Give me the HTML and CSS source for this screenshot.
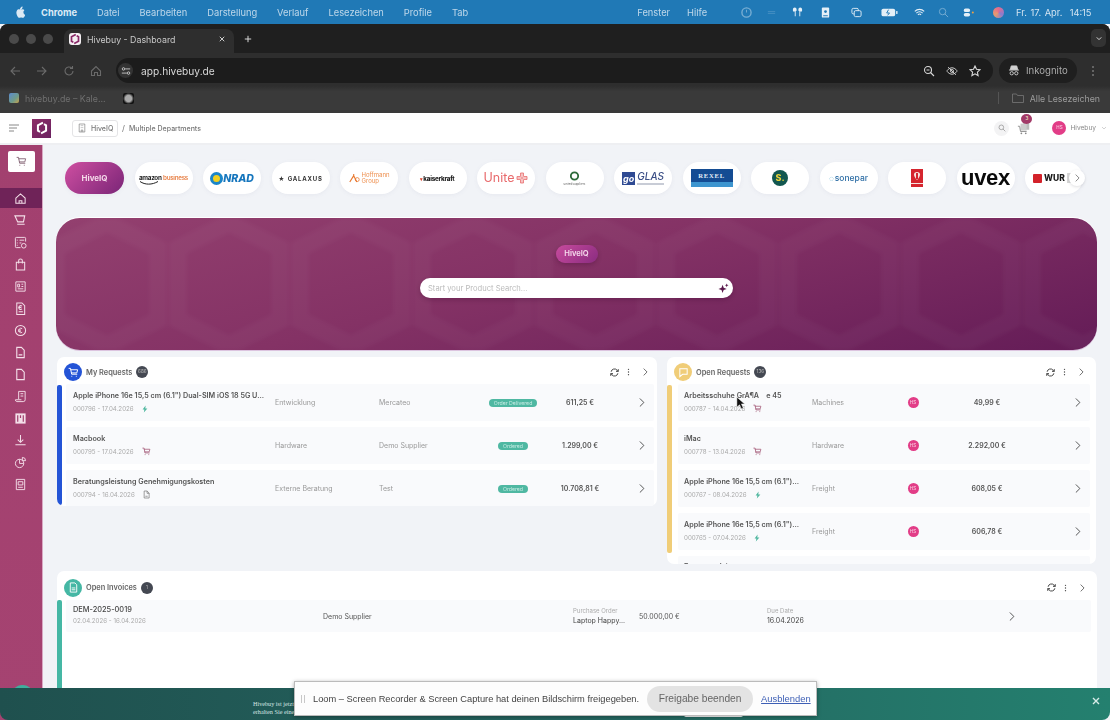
FILE: index.html
```html
<!DOCTYPE html>
<html lang="de">
<head>
<meta charset="utf-8">
<title>Hivebuy - Dashboard</title>
<link rel="stylesheet" href="styles.css">
</head>
<body>
<svg class="defs" width="0" height="0">
  <symbol id="cart" viewBox="0 0 16 16"><path d="M1.500 2h2.200l1.600 8.500h7.600M4 4h10l-1.200 4.600H5M5.500 13.500h.1M12 13.500h.1" fill="none" stroke="currentColor" stroke-width="1.400" stroke-linecap="round" stroke-linejoin="round"/></symbol>
  <symbol id="chev" viewBox="0 0 8 12"><path d="M1.500 1l5 5-5 5" fill="none" stroke="currentColor" stroke-width="1.200" stroke-linecap="round" stroke-linejoin="round"/></symbol>
  <symbol id="bolt" viewBox="0 0 10 12"><path d="M6 0L1 7h3l-1 5 6-7H5.500z" fill="currentColor"/></symbol>
  <symbol id="doc" viewBox="0 0 12 14"><path d="M2 1h5l3.500 3.500V13H2zM7 1v4h3.500M4 10h4" fill="none" stroke="currentColor" stroke-width="1.200" stroke-linejoin="round"/></symbol>
  <symbol id="refresh" viewBox="0 0 12 12"><path d="M1.500 5A4.500 4.500 0 0 1 9.500 3L11 4.500M10.500 7A4.500 4.500 0 0 1 2.500 9L1 7.500M11 1.500v3H8M1 10.500v-3h3" fill="none" stroke="currentColor" stroke-width="1.300" stroke-linejoin="round"/></symbol>
  <symbol id="dots" viewBox="0 0 4 12"><circle cx="2" cy="2" r="1" fill="currentColor"/><circle cx="2" cy="6" r="1" fill="currentColor"/><circle cx="2" cy="10" r="1" fill="currentColor"/></symbol>
  <symbol id="hive" viewBox="0 0 12 12"><path d="M6.800 1.400L2.500 3.700v4.600l1.800 1M5.200 10.600l4.300-2.300V3.700l-1.800-1" fill="none" stroke="currentColor" stroke-width="1.700"/></symbol>
</svg>

<div class="menubar">
  <svg class="apple" viewBox="0 0 12 14"><path d="M8.200 3.300c.7-.9 1-1.800.9-2.800-.9.100-1.800.6-2.400 1.300-.5.600-.9 1.500-.8 2.400 1 .1 1.800-.3 2.300-.900zM10.100 7.300c0-1.500 1.200-2.300 1.300-2.300-.7-1-1.800-1.200-2.200-1.200-.9-.1-1.800.6-2.300.6s-1.200-.6-2-.6C3.800 3.800 2.800 4.400 2.200 5.400 1 7.500 1.900 10.600 3.100 12.300c.6.800 1.200 1.700 2.100 1.700.8 0 1.100-.5 2.100-.5s1.300.5 2.100.5c.9 0 1.400-.8 2-1.700.6-.9.900-1.800.9-1.900-.1 0-2.200-.8-2.200-3.100z" fill="currentColor"/></svg>
  <b class="menu-app">Chrome</b>
  <span class="menu-item">Datei</span>
  <span class="menu-item">Bearbeiten</span>
  <span class="menu-item">Darstellung</span>
  <span class="menu-item">Verlauf</span>
  <span class="menu-item">Lesezeichen</span>
  <span class="menu-item">Profile</span>
  <span class="menu-item">Tab</span>
  <span class="menu-item menu-push">Fenster</span>
  <span class="menu-item">Hilfe</span>
  <div class="sysicons">
    <svg class="st st-dim" viewBox="0 0 12 12"><circle cx="6" cy="6" r="5" fill="none" stroke="currentColor" stroke-width="1.500"/><path d="M6 3v3" stroke="currentColor"/></svg>
    <svg class="st st-dim2" viewBox="0 0 12 12"><path d="M2 5h8M2 7h8" stroke="currentColor"/></svg>
    <svg class="st" viewBox="0 0 12 12"><path d="M1 2.500a2 2 0 0 1 4 0V4L4 4.500V10H3V5H2a1 1 0 0 1-1-1zM11 2.500a2 2 0 0 0-4 0V4l1 .5V10h1V5h1a1 1 0 0 0 1-1z" fill="currentColor"/></svg>
    <svg class="st" viewBox="0 0 12 12"><rect x="2" y="0.500" width="8" height="11" rx="1" fill="currentColor"/><circle cx="6" cy="5" r="1.500" fill="#2178b5"/><path d="M3.500 9.500h5" stroke="#2178b5"/></svg>
    <svg class="st" viewBox="0 0 12 12"><rect x="1" y="1.500" width="7" height="6" rx="1.500" fill="none" stroke="currentColor"/><rect x="3.500" y="4" width="7.500" height="6.500" rx="1.500" fill="#2178b5" stroke="currentColor"/></svg>
    <svg class="st st-bat" viewBox="0 0 18 10"><rect x="0.500" y="1" width="14.500" height="8" rx="2" fill="currentColor"/><rect x="16" y="3.500" width="1.500" height="3" fill="currentColor"/><path d="M8 2L6 5.500h3L7 8" stroke="#2178b5" fill="none"/></svg>
    <svg class="st" viewBox="0 0 14 12"><path d="M1 4.500a8.500 8.500 0 0 1 12 0M3 6.800a5.500 5.500 0 0 1 8 0M5 9a2.500 2.500 0 0 1 4 0" fill="none" stroke="currentColor" stroke-width="1.300"/></svg>
    <svg class="st st-dim" viewBox="0 0 12 12"><circle cx="5" cy="5" r="3.500" fill="none" stroke="currentColor"/><path d="M7.500 7.500L11 11" stroke="currentColor"/></svg>
    <svg class="st" viewBox="0 0 14 12"><rect x="1" y="1" width="8" height="4.500" rx="2.200" fill="currentColor"/><rect x="1" y="6.500" width="8" height="4.500" rx="2.200" fill="currentColor"/><circle cx="12.500" cy="6" r="1.300" fill="#f0a040"/></svg>
    <span class="st-avatar"></span>
    <span class="st-date">Fr. 17. Apr.&nbsp; 14:15</span>
  </div>
</div>

<div class="browser">
  <div class="tabstrip">
    <div class="lights"><i></i><i></i><i></i></div>
    <div class="tab">
      <span class="favicon"><svg><use href="#hive"/></svg></span>
      <span class="tab-title">Hivebuy - Dashboard</span>
      <svg class="tab-x" viewBox="0 0 8 8"><path d="M1 1l6 6M7 1L1 7" stroke="currentColor" stroke-width="1.200"/></svg>
    </div>
    <svg class="tab-plus" viewBox="0 0 10 10"><path d="M5 1v8M1 5h8" stroke="currentColor" stroke-width="1.200"/></svg>
    <span class="tab-down"><svg viewBox="0 0 8 6"><path d="M1 1.500l3 3 3-3" fill="none" stroke="currentColor" stroke-width="1.300"/></svg></span>
  </div>
  <div class="toolbar">
    <svg class="tb tb-off" viewBox="0 0 12 12"><path d="M11 6H2M6 2L2 6l4 4" fill="none" stroke="currentColor" stroke-width="1.100"/></svg>
    <svg class="tb tb-off" viewBox="0 0 12 12"><path d="M1 6h9M6 2l4 4-4 4" fill="none" stroke="currentColor" stroke-width="1.100"/></svg>
    <svg class="tb tb-off" viewBox="0 0 12 12"><path d="M10 6a4 4 0 1 1-1.300-3M9.500 1v2.500H7" fill="none" stroke="currentColor" stroke-width="1.100"/></svg>
    <svg class="tb tb-off" viewBox="0 0 12 12"><path d="M1.500 6L6 1.500 10.500 6v4.500h-3V7.500h-3v3h-3z" fill="none" stroke="currentColor" stroke-width="1.100"/></svg>
    <div class="omnibox">
      <span class="tune"><svg viewBox="0 0 12 12"><path d="M5 3.500h6M1 8.500h6" stroke="currentColor"/><circle cx="3" cy="3.500" r="1.500" fill="none" stroke="currentColor"/><circle cx="9" cy="8.500" r="1.500" fill="none" stroke="currentColor"/></svg></span>
      <span class="url">app.hivebuy.de</span>
      <svg class="om om-first" viewBox="0 0 12 12"><circle cx="5" cy="5" r="3.500" fill="none" stroke="currentColor" stroke-width="1.100"/><path d="M7.500 7.500L11 11M3.500 5h3" stroke="currentColor" stroke-width="1.100"/></svg>
      <svg class="om" viewBox="0 0 14 12"><path d="M1 6s2.200-3.800 6-3.800S13 6 13 6s-2.200 3.800-6 3.800S1 6 1 6zM2.500 1.500l9 9" fill="none" stroke="currentColor" stroke-width="1.100"/><circle cx="7" cy="6" r="1.800" fill="none" stroke="currentColor"/></svg>
      <svg class="om" viewBox="0 0 12 12"><path d="M6 1l1.500 3.300 3.500.4-2.600 2.400.7 3.500L6 8.800l-3.100 1.800.7-3.500L1 4.700l3.500-.4z" fill="none" stroke="currentColor" stroke-width="1.100"/></svg>
    </div>
    <div class="incognito">
      <svg viewBox="0 0 12 12"><path d="M3 1h6l1 4H2zM0.500 5.500h11" fill="currentColor" stroke="currentColor"/><circle cx="3.500" cy="9" r="1.800" fill="none" stroke="currentColor"/><circle cx="8.500" cy="9" r="1.800" fill="none" stroke="currentColor"/></svg>
      <span>Inkognito</span>
    </div>
    <svg class="tb-dots"><use href="#dots"/></svg>
  </div>
  <div class="bookmarks">
    <span class="bm-icon"></span>
    <span class="bm-text">hivebuy.de – Kale...</span>
    <span class="bm-icon2"></span>
    <span class="bm-sep"></span>
    <svg class="bm-folder" viewBox="0 0 12 10"><path d="M.5 1h4l1 1.500h6v7H.5z" fill="none" stroke="currentColor" stroke-width=".8"/></svg>
    <span class="bm-all">Alle Lesezeichen</span>
  </div>
</div>

<header class="apphead">
  <svg class="burger" viewBox="0 0 10 8"><path d="M0 1h10M0 4h8M0 7h5" stroke="currentColor"/></svg>
  <span class="applogo"><svg><use href="#hive"/></svg></span>
  <span class="crumb-box">
    <svg viewBox="0 0 10 12"><path d="M1.500 1h7v10h-7zM3.500 3h1M5.500 3h1M3.500 5.500h1M5.500 5.500h1M4 11V8.500h2V11" fill="none" stroke="currentColor" stroke-width=".8"/></svg>
    <span>HiveIQ</span>
  </span>
  <span class="crumb-sep">/</span>
  <span class="crumb-dept">Multiple Departments</span>
  <span class="head-search"><svg viewBox="0 0 12 12"><circle cx="5" cy="5" r="3.500" fill="none" stroke="currentColor"/><path d="M7.500 7.500L11 11" stroke="currentColor"/></svg></span>
  <span class="head-cart">
    <svg viewBox="0 0 16 16"><rect x="7" y="1" width="7" height="9" fill="#bbb"/><rect x="4" y="3" width="7" height="8" fill="#ccc"/><path d="M1 6h2l1 6h7" fill="none" stroke="#888"/><circle cx="5" cy="14" r="1" fill="#888"/><circle cx="10" cy="14" r="1" fill="#888"/></svg>
    <b class="head-badge">3</b>
  </span>
  <span class="avatar avatar-head">HS</span>
  <span class="head-user">Hivebuy</span>
  <svg class="head-down" viewBox="0 0 8 6"><path d="M1 1.500l3 3 3-3" fill="none" stroke="currentColor"/></svg>
</header>

<div class="app">
  <nav class="sidebar">
    <span class="shop-btn"><svg><use href="#cart"/></svg></span>
    <span class="nav nav-active"><svg viewBox="0 0 14 14"><path d="M2 6.500L7 2l5 4.500V12H2zM5.500 12V9.500h3V12" fill="none" stroke="currentColor" stroke-width="1.100"/></svg></span>
    <span class="nav"><svg viewBox="0 0 14 14"><path d="M1 2h10.500l-1.300 6.500H4zM3.500 11h8" fill="none" stroke="currentColor" stroke-width="1.200"/></svg></span>
    <span class="nav"><svg viewBox="0 0 14 14"><path d="M12.500 6V2.500a1 1 0 0 0-1-1h-9a1 1 0 0 0-1 1v9a1 1 0 0 0 1 1H7M3 4.500h1M6 4.500h5M3 7.500h1M6 7.500h2M3 10h1" fill="none" stroke="currentColor"/><circle cx="10.500" cy="10.500" r="2.500" fill="none" stroke="currentColor"/></svg></span>
    <span class="nav"><svg viewBox="0 0 14 14"><path d="M2.500 4.500h9v8.500h-9zM5 6V3a2 2 0 0 1 4 0v3" fill="none" stroke="currentColor" stroke-width="1.100"/></svg></span>
    <span class="nav"><svg viewBox="0 0 14 14"><path d="M2 2h10v10H2zM4 4.500h2v3H4zM8 4.500h2M8 7h2M4 9.500h6" fill="none" stroke="currentColor"/></svg></span>
    <span class="nav"><svg viewBox="0 0 14 14"><path d="M3 1h5.500l3 3v9.500H3zM5 10.500h4.500M8.500 4.500a2 2 0 1 0 0 3M5 6h3" fill="none" stroke="currentColor" stroke-width="1.100"/></svg></span>
    <span class="nav"><svg viewBox="0 0 14 14"><circle cx="7" cy="7" r="5.500" fill="none" stroke="currentColor" stroke-width="1.100"/><path d="M8.800 5a2.400 2.400 0 1 0 0 4M4.500 6.500h3M4.500 7.800h3" fill="none" stroke="currentColor"/></svg></span>
    <span class="nav"><svg viewBox="0 0 14 14"><path d="M3 1.500h5l3 3v8H3zM5 9.500h4" fill="none" stroke="currentColor" stroke-width="1.200"/></svg></span>
    <span class="nav"><svg viewBox="0 0 14 14"><path d="M3 1.500h5l3 3v8H3z" fill="none" stroke="currentColor" stroke-width="1.200"/></svg></span>
    <span class="nav"><svg viewBox="0 0 14 14"><path d="M5 1.500h7v9a2 2 0 0 1-2 2H3a2 2 0 0 1-1.500-2H8M5 10V1.500M7 4h3M7 6.500h3" fill="none" stroke="currentColor"/></svg></span>
    <span class="nav"><svg viewBox="0 0 14 14"><path d="M1.500 1.500h11v11h-11z" fill="currentColor"/><path d="M4 3.500v7M7 3.500v3M10 3.500v7" stroke="#a2416f" stroke-width="1.300"/></svg></span>
    <span class="nav"><svg viewBox="0 0 14 14"><path d="M7 1v7.500M4 6l3 3 3-3M1.500 11.500h11" fill="none" stroke="currentColor" stroke-width="1.100"/></svg></span>
    <span class="nav"><svg viewBox="0 0 14 14"><circle cx="6" cy="8" r="4.500" fill="none" stroke="currentColor"/><path d="M6 8V3.500M6 8h4.500M9 1.500a3.500 3.500 0 0 1 3.500 3.500H9z" fill="none" stroke="currentColor"/></svg></span>
    <span class="nav"><svg viewBox="0 0 14 14"><path d="M2.500 1.500h9v11h-9zM4.500 4h5v3.500h-5zM4.500 10h5" fill="none" stroke="currentColor"/></svg></span>
    <span class="nav-chat"></span>
  </nav>

  <main class="content">
    <div class="suppliers">
      <span class="pill pill-main">HiveIQ</span>
      <span class="pill"><span class="l-amazon"><b>amazon</b> <i>business</i><svg viewBox="0 0 20 4"><path d="M1 .5c5 3.500 12 3.500 18 0" fill="none" stroke="#222"/></svg></span></span>
      <span class="pill"><span class="l-conrad-c"></span><span class="l-conrad">NRAD</span></span>
      <span class="pill"><span class="l-galaxus">★ GALAXUS</span></span>
      <span class="pill"><svg class="l-hof-i" viewBox="0 0 14 12"><path d="M1 11L6 3M6 3l4 8M6 1v4" fill="none" stroke="#e8782e" stroke-width="1.400"/><circle cx="10.500" cy="8" r="2.500" fill="none" stroke="#e8782e"/></svg><span class="l-hof">Hoffmann<br>Group</span></span>
      <span class="pill"><span class="l-kk">kaiserkraft</span></span>
      <span class="pill"><span class="l-unite">Unite</span><svg class="l-unite-i" viewBox="0 0 12 12"><path d="M4.500 1h3v3.500H11v3H7.500V11h-3V7.500H1v-3h3.500zM1 6h10M6 1v10" fill="none" stroke="#e8696b" stroke-width=".8"/></svg></span>
      <span class="pill"><span class="l-circle"><svg viewBox="0 0 12 12"><circle cx="6" cy="6" r="4" fill="none" stroke="#2e6b3a" stroke-width="2"/></svg><small>unitedsuppliers</small></span></span>
      <span class="pill"><span class="l-go">go</span><span class="l-glas">GLAS</span></span>
      <span class="pill"><span class="l-rexel">Rexel</span></span>
      <span class="pill"><span class="l-s">S.</span></span>
      <span class="pill"><span class="l-sonepar">sonepar</span></span>
      <span class="pill"><svg class="l-red" viewBox="0 0 12 18"><rect width="12" height="18" fill="#d5252e"/><path d="M6 3c-2 0-3 1-3 2.500S4 9 6 11c2-2 3-4 3-5.500S8 3 6 3z" fill="#f6e3df"/><rect x="5" y="4" width="2" height="6" fill="#d5252e"/><rect y="14" width="12" height="1" fill="#f6e3df"/></svg></span>
      <span class="pill"><span class="l-uvex">uvex</span></span>
      <span class="pill pill-last"><span class="l-wu"></span><span class="l-wurth">WUR</span><span class="pill-fade"></span></span>
      <span class="pill-next"><svg><use href="#chev"/></svg></span>
    </div>

    <section class="hero">
      <svg class="hero-bg" width="100%" height="100%"><defs><pattern id="hx" width="122" height="132" patternUnits="userSpaceOnUse" x="-10" y="0"><path d="M61 5L112 30V102L61 127L10 102V30Z" fill="none" stroke="#fff" stroke-opacity=".03" stroke-width="18"/></pattern></defs><rect width="100%" height="100%" fill="url(#hx)"/></svg>
      <span class="hero-pill">HiveIQ</span>
      <div class="hero-search">
        <span>Start your Product Search...</span>
        <svg viewBox="0 0 12 12"><path d="M5 2l1.200 3.300L9.500 6.500 6.200 7.700 5 11 3.800 7.700.5 6.500l3.300-1.200zM9.500 .5l.6 1.400 1.400.6-1.400.6-.6 1.400-.6-1.400-1.400-.6 1.400-.6z" fill="#5a1a4c"/></svg>
      </div>
    </section>

    <div class="cards">
      <section class="card card-my">
        <header class="card-head">
          <span class="card-ico ico-blue"><svg><use href="#cart"/></svg></span>
          <span class="card-title">My Requests</span>
          <span class="count">686</span>
          <span class="card-actions">
            <svg class="a-ref"><use href="#refresh"/></svg>
            <svg class="a-dot"><use href="#dots"/></svg>
            <svg class="a-che"><use href="#chev"/></svg>
          </span>
        </header>
        <div class="card-body">
          <span class="bar bar-blue"></span>
          <div class="rows">
            <div class="row row-my">
              <div class="main"><b>Apple iPhone 16e 15,5 cm (6.1") Dual-SIM iOS 18 5G U...</b><span class="meta">000796 - 17.04.2026<svg class="m-bolt"><use href="#bolt"/></svg></span></div>
              <span class="cell">Entwicklung</span><span class="cell">Mercateo</span>
              <span class="state"><i>Order Delivered</i></span><b class="price">611,25 €</b><svg class="go"><use href="#chev"/></svg>
            </div>
            <div class="row row-my">
              <div class="main"><b>Macbook</b><span class="meta">000795 - 17.04.2026<svg class="m-cart"><use href="#cart"/></svg></span></div>
              <span class="cell">Hardware</span><span class="cell">Demo Supplier</span>
              <span class="state"><i>Ordered</i></span><b class="price">1.299,00 €</b><svg class="go"><use href="#chev"/></svg>
            </div>
            <div class="row row-my">
              <div class="main"><b>Beratungsleistung Genehmigungskosten</b><span class="meta">000794 - 16.04.2026<svg class="m-doc"><use href="#doc"/></svg></span></div>
              <span class="cell">Externe Beratung</span><span class="cell">Test</span>
              <span class="state"><i>Ordered</i></span><b class="price">10.708,81 €</b><svg class="go"><use href="#chev"/></svg>
            </div>
          </div>
        </div>
      </section>

      <section class="card card-open">
        <header class="card-head">
          <span class="card-ico ico-yellow"><svg viewBox="0 0 12 12"><path d="M2 2h8v6H5L2 10.500z" fill="none" stroke="#fff" stroke-width="1.100"/></svg></span>
          <span class="card-title">Open Requests</span>
          <span class="count">136</span>
          <span class="card-actions">
            <svg class="a-ref"><use href="#refresh"/></svg>
            <svg class="a-dot"><use href="#dots"/></svg>
            <svg class="a-che"><use href="#chev"/></svg>
          </span>
        </header>
        <div class="card-body">
          <span class="bar bar-yellow"></span>
          <div class="rows">
            <div class="row row-open">
              <div class="main"><b>Arbeitsschuhe GrÃ¶Ã&nbsp;&nbsp;&nbsp;&nbsp;e 45</b><span class="meta">000787 - 14.04.2026<svg class="m-cart"><use href="#cart"/></svg></span></div>
              <span class="cell">Machines</span><span class="avatar">HS</span><b class="price">49,99 €</b><svg class="go"><use href="#chev"/></svg>
            </div>
            <div class="row row-open">
              <div class="main"><b>iMac</b><span class="meta">000778 - 13.04.2026<svg class="m-cart"><use href="#cart"/></svg></span></div>
              <span class="cell">Hardware</span><span class="avatar">HS</span><b class="price">2.292,00 €</b><svg class="go"><use href="#chev"/></svg>
            </div>
            <div class="row row-open">
              <div class="main"><b>Apple iPhone 16e 15,5 cm (6.1")...</b><span class="meta">000767 - 08.04.2026<svg class="m-bolt"><use href="#bolt"/></svg></span></div>
              <span class="cell">Freight</span><span class="avatar">HS</span><b class="price">608,05 €</b><svg class="go"><use href="#chev"/></svg>
            </div>
            <div class="row row-open">
              <div class="main"><b>Apple iPhone 16e 15,5 cm (6.1")...</b><span class="meta">000765 - 07.04.2026<svg class="m-bolt"><use href="#bolt"/></svg></span></div>
              <span class="cell">Freight</span><span class="avatar">HS</span><b class="price">606,78 €</b><svg class="go"><use href="#chev"/></svg>
            </div>
            <div class="row row-open row-cut">
              <div class="main"><b>Beratungsleistung</b></div>
            </div>
          </div>
        </div>
      </section>
    </div>

    <section class="card card-inv">
      <header class="card-head">
        <span class="card-ico ico-teal"><svg viewBox="0 0 12 12"><path d="M2.500 1h5l2 2v8h-7zM4 8.500h4M4 6.500h4" fill="none" stroke="#fff"/></svg></span>
        <span class="card-title">Open Invoices</span>
        <span class="count">1</span>
        <span class="card-actions">
          <svg class="a-ref"><use href="#refresh"/></svg>
          <svg class="a-dot"><use href="#dots"/></svg>
          <svg class="a-che"><use href="#chev"/></svg>
        </span>
      </header>
      <div class="card-body">
        <span class="bar bar-teal"></span>
        <div class="rows">
          <div class="row row-inv">
            <div class="main"><b>DEM-2025-0019</b><span class="meta">02.04.2026 - 16.04.2026</span></div>
            <span class="cell cell-dark">Demo Supplier</span>
            <div class="stack"><small>Purchase Order</small><span>Laptop Happy...</span></div>
            <span class="cell cell-dark">50.000,00 €</span>
            <div class="stack"><small>Due Date</small><span>16.04.2026</span></div>
            <svg class="go"><use href="#chev"/></svg>
          </div>
        </div>
      </div>
    </section>
  </main>
</div>

<div class="banner">
  <p class="banner-text">Hivebuy ist jetzt<br>erhalten Sie eine</p>
  <span class="banner-btn"></span>
  <svg class="banner-x" viewBox="0 0 8 8"><path d="M1 1l6 6M7 1L1 7" stroke="currentColor" stroke-width="1.400"/></svg>
</div>

<div class="loom">
  <span class="loom-grip"></span>
  <span class="loom-text">Loom – Screen Recorder &amp; Screen Capture hat deinen Bildschirm freigegeben.</span>
  <span class="loom-stop">Freigabe beenden</span>
  <span class="loom-hide">Ausblenden</span>
</div>

<svg class="cursor" viewBox="0 0 10 15"><path d="M1 1v11l3-2.500 2 4.500 2-1-2-4.500h3.500z" fill="#111" stroke="#eee" stroke-width=".5"/></svg>
</body>
</html>
```
FILE: styles.css
```css
* { box-sizing: border-box; }
html, body { margin: 0; height: 720px; overflow: hidden; }
body { position: relative; width: 1110px; display: flex; flex-direction: column; font-family: Inter, "Liberation Sans", sans-serif; background: #f1f3f7; color: #555; filter: blur(.3px); }
svg { display: block; flex: none; }
.defs { position: absolute; }

/* mac menu bar */
.menubar { height: 24px; flex: none; display: flex; align-items: center; padding-left: 15px; background: #2079b6; color: #d3e4f1; font-size: 9.300px; }
.menubar > * { flex: none; }
.apple { width: 10px; height: 12px; color: #dbe9f4; margin-right: 16px; }
.menu-app { color: #dcebf6; font-size: 9.300px; margin-right: 20px; font-weight: 700; }
.menu-item { margin-right: 20px; opacity: .88; }
.menu-push { margin-left: 149px; margin-right: 17px; }
.sysicons { display: flex; align-items: center; margin-left: 14px; color: #e4eff7; }
.st { width: 11px; height: 11px; margin-right: 15px; }
.st:nth-child(1) { margin-right: 14px; }
.st:nth-child(3) { margin-right: 17px; }
.st:nth-child(4) { margin-right: 20px; }
.st:nth-child(5) { margin-right: 19px; }
.st:nth-child(6) { margin-right: 16px; }
.st:nth-child(7) { margin-right: 13px; }
.st:nth-child(8) { margin-right: 14px; }
.st:nth-child(9) { margin-right: 19px; }
.st-dim { opacity: .45; }
.st-dim2 { opacity: .2; }
.st-bat { width: 17px; }
.st-avatar { width: 11px; height: 11px; border-radius: 50%; background: conic-gradient(#e46b8e, #8a7ccf, #e89a6d, #e46b8e); margin: 0 12px 0 0; }
.st-date { font-size: 9.300px; word-spacing: 1px; white-space: nowrap; color: #d3e4f1; }

/* chrome */
.browser { flex: none; color: #bbb; border-radius: 8px 8px 0 0; overflow: hidden; background: #1f1f1f; }
.tabstrip { height: 29px; display: flex; align-items: flex-end; background: #1f1f1f; padding-left: 9px; }
.lights { display: flex; gap: 7px; align-self: center; margin-right: 11px; }
.lights i { width: 10px; height: 10px; border-radius: 50%; background: #4a4a4a; }
.tab { width: 170px; height: 24px; display: flex; align-items: center; background: #2e2e2e; border-radius: 8px 8px 0 0; padding: 0 0 4px 5px; }
.favicon { width: 12px; height: 12px; border-radius: 3px; background: #f4f0f3; color: #8a2a68; flex: none; }
.favicon svg { width: 12px; height: 12px; }
.tab-title { font-size: 8.800px; color: #c9c9c9; margin-left: 6px; white-space: nowrap; }
.tab-x { width: 6px; height: 6px; margin-left: auto; margin-right: 9px; color: #ddd; }
.tab-plus { width: 8px; height: 8px; margin: 0 0 10px 10px; color: #ddd; }
.tab-down { margin-left: auto; margin-right: 4px; margin-bottom: 6px; width: 15px; height: 18px; background: #333; border-radius: 5px; display: flex; align-items: center; justify-content: center; color: #ddd; }
.tab-down svg { width: 6px; height: 5px; }
.toolbar { height: 33px; display: flex; align-items: center; background: #2e2e2e; padding: 2px 0 0 9px; }
.tb { width: 12px; height: 12px; margin-right: 15px; }
.tb-off { color: #6a6a6a; }
.omnibox { width: 877px; height: 25px; flex: none; margin-left: -1px; border-radius: 13px; background: #1c1c1c; display: flex; align-items: center; padding-left: 2px; color: #d6d6d6; }
.tune { width: 15px; height: 15px; margin-left: 0; border-radius: 50%; background: #333; display: flex; align-items: center; justify-content: center; }
.tune svg { width: 10px; height: 10px; }
.url { font-size: 10.200px; margin-left: 8px; color: #d8d8d8; }
.om { width: 12px; height: 12px; margin-left: 11px; }
.om-first { margin-left: auto; }
.omnibox .om:last-child { margin-right: 12px; }
.incognito { margin-left: 6px; width: 78px; height: 25px; flex: none; border-radius: 13px; background: #1f1f1f; display: flex; align-items: center; padding-left: 9px; gap: 6px; color: #aaa; font-size: 9.600px; }
.incognito svg { width: 12px; height: 11px; color: #d0d0d0; }
.tb-dots { width: 4px; height: 12px; margin-left: 14px; color: #777; }
.bookmarks { height: 27px; display: flex; align-items: center; background: linear-gradient(#2e2e2e, #3a3a3a 20%); padding: 0 0 3px 9px; font-size: 8.800px; color: #666; }
.bm-icon { width: 10px; height: 10px; border-radius: 2px; background: linear-gradient(135deg, #5b8bd0, #6f9c8a 60%, #c9a24c); }
.bm-text { margin-left: 6px; color: #6f6f6f; }
.bm-icon2 { width: 11px; height: 11px; border-radius: 2px; margin-left: 17px; background: radial-gradient(circle, #aaa 40%, #111 70%); }
.bm-sep { width: 1px; height: 12px; background: #555; margin-left: auto; }
.bm-folder { width: 12px; height: 10px; margin-left: 13px; color: #777; }
.bm-all { margin-left: 6px; margin-right: 10px; color: #9c9c9c; }

/* app header */
.apphead { height: 32px; flex: none; display: flex; align-items: center; background: #fff; border-bottom: 2px solid #eeeff2; padding-left: 9px; }
.burger { width: 10px; height: 8px; color: #888; }
.applogo { width: 19px; height: 19px; margin-left: 13px; background: linear-gradient(135deg, #8d2d68, #6a2160); display: flex; align-items: center; justify-content: center; color: #fff; }
.applogo svg { width: 14px; height: 14px; }
.crumb-box { display: flex; align-items: center; gap: 5px; margin-left: 21px; width: 46px; height: 17px; border: 1px solid #e4e4e6; border-radius: 3px; padding-left: 5px; font-size: 7px; font-weight: 500; color: #777; }
.crumb-box svg { width: 8px; height: 10px; color: #777; }
.crumb-sep { margin-left: 4px; font-size: 8px; color: #777; }
.crumb-dept { margin-left: 4px; font-size: 7px; font-weight: 500; color: #777; }
.head-search { margin-left: auto; width: 15px; height: 15px; border-radius: 50%; background: #f3f3f4; display: flex; align-items: center; justify-content: center; color: #888; }
.head-search svg { width: 8px; height: 8px; }
.head-cart { position: relative; margin-left: 8px; width: 14px; height: 14px; }
.head-cart svg { width: 14px; height: 14px; }
.head-badge { position: absolute; left: 4px; top: -7px; width: 11px; height: 10px; border-radius: 50%; background: #a23a68; color: #eec; font-size: 4.500px; line-height: 10px; text-align: center; font-weight: 500; }
.avatar { width: 11px; height: 11px; border-radius: 50%; background: #e23d87; color: #f7c6dc; font-size: 4.500px; line-height: 11px; text-align: center; justify-self: center; font-weight: 500; }
.avatar-head { width: 14px; height: 14px; line-height: 14px; margin-left: 21px; }
.head-user { font-size: 6.600px; margin-left: 4px; color: #888; }
.head-down { width: 6px; height: 4px; margin: 0 3px 0 5px; color: #bbb; }

/* layout */
.app { flex: 1; min-height: 0; display: flex; overflow: hidden; }
.sidebar { width: 43px; flex: none; background: linear-gradient(180deg, #a2406f, #a54371); border-right: 1px solid #d9a9c4; display: flex; flex-direction: column; color: #f4dfe9; padding-top: 6px; position: relative; }
.shop-btn { width: 27px; height: 21px; margin: 0 0 16px 8px; background: #fff; border-radius: 2px; display: flex; align-items: center; justify-content: center; color: #8a6b7c; flex: none; }
.shop-btn svg { width: 11px; height: 11px; }
.nav { height: 22px; flex: none; display: flex; align-items: center; justify-content: center; padding-right: 1px; }
.nav svg { width: 13px; height: 13px; }
.nav-active { height: 20px; margin: 0 0 1px; background: #6f2358; }
.nav-chat { position: absolute; left: 11px; top: 540px; width: 23px; height: 23px; border-radius: 50%; background: #3fae9c; }

.content { flex: 1; min-width: 0; padding: 17px 13px 0; overflow: hidden; }
.suppliers { position: relative; display: flex; gap: 10.500px; height: 32px; padding-left: 9px; }
.pill { position: relative; flex: none; width: 58px; height: 32px; border-radius: 16px; background: #fff; box-shadow: 0 1px 4px rgba(120, 120, 150, .08); display: flex; align-items: center; justify-content: center; gap: 2px; overflow: hidden; }
.pill-main { width: 59px; background: linear-gradient(135deg, #cf4fa1, #7a2577); color: #f5d9ea; font-size: 8px; font-weight: 700; }
.l-amazon { position: relative; font-size: 6.300px; white-space: nowrap; color: #222; letter-spacing: -.3px; }
.l-amazon i { color: #e8834a; font-style: normal; font-weight: 600; }
.l-amazon svg { position: absolute; left: 0; top: 7px; width: 20px; height: 4px; }
.l-conrad-c { width: 13px; height: 13px; border-radius: 50%; border: 3px solid #1b86c9; background: #f1d020; flex: none; margin-right: -2px; }
.l-conrad { color: #1676bd; font-size: 10.500px; font-weight: 800; font-style: italic; }
.l-galaxus { font-size: 6px; font-weight: 700; letter-spacing: .8px; color: #333; white-space: nowrap; }
.l-hof-i { width: 11px; height: 10px; }
.l-hof { color: #ee9050; font-size: 6px; line-height: 6px; }
.l-kk { font-size: 6.200px; font-weight: 800; color: #222; letter-spacing: -.2px; }
.l-kk::before { content: "▾"; color: #d8442e; font-size: 5px; }
.l-unite { color: #e8696b; font-size: 12.500px; line-height: 1; }
.l-unite-i { width: 12px; height: 12px; }
.l-circle { display: flex; flex-direction: column; align-items: center; }
.l-circle svg { width: 11px; height: 12px; }
.l-circle small { font-size: 3px; color: #666; }
.l-go { background: #2f4a93; color: #fff; font-size: 9px; font-weight: 700; font-style: italic; padding: 2px 1px; line-height: 1; }
.l-glas { color: #3c4f86; font-size: 10px; font-style: italic; font-weight: 500; border-bottom: 2px solid #c8ccd6; line-height: 1; padding-bottom: 2px; }
.l-rexel { width: 42px; height: 18px; background: linear-gradient(#144c93 72%, #3d95cf 72%); color: #e3ecf6; font-family: "Liberation Serif", serif; font-size: 6.600px; letter-spacing: .8px; line-height: 13px; text-align: center; text-transform: uppercase; font-weight: 700; }
.l-s { width: 16px; height: 16px; border-radius: 50%; background: #12574f; color: #e8d238; font-size: 9px; font-weight: 800; line-height: 16px; text-align: center; }
.l-sonepar { color: #2f6fa6; font-size: 8.500px; font-weight: 500; }
.l-sonepar::before { content: "◌"; color: #4ca6c8; font-size: 8px; margin-right: 1px; }
.l-red { width: 12px; height: 18px; }
.l-uvex { color: #0a0a0a; font-size: 22px; font-weight: 700; letter-spacing: -.3px; font-family: "Liberation Sans", sans-serif; }
.l-wu { width: 9px; height: 9px; background: #d3222a; border-radius: 1px; flex: none; }
.l-wurth { color: #1a1a1a; font-size: 8.500px; font-weight: 800; }
.pill-last { justify-content: flex-start; padding-left: 8px; }
.pill-fade { width: 10px; height: 10px; background: #bbb; opacity: .6; flex: none; }
.pill-next { position: absolute; left: 1013px; top: 8px; width: 16px; height: 16px; border-radius: 50%; background: #fff; box-shadow: 0 1px 3px rgba(80, 80, 90, .18); display: flex; align-items: center; justify-content: center; color: #666; }
.pill-next svg { width: 5px; height: 8px; }

/* hero */
.hero { position: relative; margin-top: 24px; height: 132px; border-radius: 24px; background: linear-gradient(165deg, #93406f 0%, #843265 45%, #641c57 100%); box-shadow: 0 1px 0 #dcc4df, 0 -1px 0 #fff; display: flex; flex-direction: column; align-items: center; overflow: hidden; }
.hero-bg { position: absolute; left: 0; top: 0; filter: blur(2px); }
.hero-pill { position: relative; margin: 27px 0 0; width: 42px; height: 18px; border-radius: 9px; background: linear-gradient(135deg, #c74b9d, #8a2c80); color: #f7dcee; font-size: 7.600px; font-weight: 600; text-align: center; line-height: 18px; box-shadow: 0 2px 4px rgba(50, 0, 40, .25); }
.hero-search { position: relative; margin-top: 15px; width: 313px; height: 20px; border-radius: 10px; background: #fff; display: flex; align-items: center; justify-content: space-between; padding: 0 4px 0 8px; font-size: 7.600px; color: #bbb; box-shadow: 0 2px 4px rgba(50, 0, 40, .25); }
.hero-search svg { width: 11px; height: 11px; }

/* cards */
.cards { display: grid; grid-template-columns: 600px 429px; gap: 10px; margin: 7px 0 0 1px; height: 207px; align-items: start; }
.card { background: #fff; border-radius: 7px; overflow: hidden; }
.card-my { height: 149px; }
.card-open { height: 207px; }
.card-inv { margin: 7px 0 0 1px; height: 200px; }
.card-head { height: 27px; display: flex; align-items: center; padding: 3px 0 0 7px; }
.card-inv .card-head { height: 29px; padding-top: 4px; }
.card-ico { width: 18px; height: 18px; border-radius: 50%; display: flex; align-items: center; justify-content: center; color: #fff; flex: none; }
.card-ico svg { width: 11px; height: 11px; }
.ico-blue { background: #2454d6; }
.ico-yellow { background: #f0cd78; }
.ico-teal { background: #45b7a4; }
.card-title { margin-left: 4px; font-size: 7.400px; font-weight: 600; color: #666; }
.count { margin-left: 4px; min-width: 12px; height: 12px; border-radius: 50%; background: #444852; color: #bbb; font-size: 4.600px; line-height: 12px; text-align: center; }
.card-actions { margin-left: auto; display: flex; align-items: center; color: #444; }
.a-ref { width: 9px; height: 9px; }
.a-dot { width: 3px; height: 8px; margin-left: 8px; }
.a-che { width: 5px; height: 8px; margin: 0 12px 0 13px; }
.card-my .a-che { margin-right: 9px; }
.card-body { display: flex; }
.bar { width: 5px; flex: none; border-radius: 2px; margin-top: 1px; }
.bar-blue { height: 120px; background: #2454d6; }
.bar-yellow { height: 168px; background: #f0cd78; }
.bar-teal { height: 180px; background: #45b7a4; margin-top: 0; }
.rows { flex: 1; min-width: 0; display: flex; flex-direction: column; gap: 6px; margin-left: 4px; }
.row { display: grid; align-items: center; height: 37px; flex: none; background: #f9fafc; border-radius: 2px; padding-left: 7px; font-size: 7px; color: #999; }
.row-my { grid-template-columns: 202px 104px 100px 68px 66px 1fr; margin-right: 3px; }
.row-open { grid-template-columns: 128px 68px 66px 82px 1fr; margin: 0 6px 0 2px; padding-left: 6px; }
.row-cut { align-items: start; padding-top: 6px; }
.row-inv { grid-template-columns: 250px 250px 66px 128px 242px 1fr; margin: 0 6px 0 0; height: 32px; }
.main { display: flex; flex-direction: column; gap: 3px; min-width: 0; padding-bottom: 1px; }
.main b { font-size: 7.200px; line-height: 10px; font-weight: 600; color: #555; white-space: nowrap; overflow: hidden; }
.row-inv .main { gap: 1px; }
.row-inv .main b { font-size: 7.400px; font-weight: 500; color: #444; }
.meta { display: flex; align-items: center; font-size: 6.200px; line-height: 10px; color: #aaa; white-space: nowrap; }
.meta svg { margin-left: 8px; }
.m-bolt { width: 6px; height: 8px; color: #4fb79f; }
.m-cart { width: 9px; height: 9px; color: #a55a78; }
.m-doc { width: 7px; height: 9px; color: #777; }
.cell { white-space: nowrap; }
.cell-dark { color: #555; }
.state { display: flex; justify-content: center; }
.state i { font-style: normal; font-size: 5.200px; line-height: 8px; padding: 0 5px; background: #4fb8a2; border-radius: 4px; color: #c8ece4; white-space: nowrap; }
.price { text-align: center; font-size: 7px; font-weight: 600; color: #555; white-space: nowrap; }
.go { width: 6px; height: 9px; color: #444; justify-self: end; margin-right: 9px; }
.row-inv .go { justify-self: start; margin: 0; }
.stack { display: flex; flex-direction: column; gap: 1px; font-size: 7px; color: #444; }
.stack small { font-size: 6px; color: #aaa; line-height: 9px; }
.stack span { line-height: 10px; white-space: nowrap; }

/* overlays */
.banner { position: absolute; left: 0; right: 0; bottom: 0; height: 32px; border-radius: 0 0 8px 8px; background: linear-gradient(90deg, #1f504e 0%, #24645f 50%, #24806f 100%); }
.banner-text { margin: 12px 0 0 253px; font-family: "Liberation Serif", serif; font-size: 6.200px; line-height: 8px; color: #d6e4e2; white-space: nowrap; }
.banner-btn { position: absolute; left: 684px; top: 26px; width: 59px; height: 3px; border-radius: 0 0 2px 2px; background: #fff; }
.banner-x { position: absolute; right: 10px; top: 9px; width: 8px; height: 8px; color: #d8ece8; }
.loom { position: absolute; left: 294px; top: 681px; width: 523px; height: 35px; background: #fdfdfd; border: 1px solid #bbb; box-shadow: 0 1px 4px rgba(0, 0, 0, .35); display: flex; align-items: center; padding-left: 6px; font-family: "Liberation Sans", Arial, sans-serif; }
.loom > * { flex: none; }
.loom-grip { width: 4px; height: 8px; border-left: 1.500px solid #c8c8c8; border-right: 1.500px solid #c8c8c8; }
.loom-text { margin-left: 8px; font-size: 9.300px; color: #444; white-space: nowrap; }
.loom-stop { margin-left: 8px; width: 106px; height: 26px; border-radius: 13px; background: #e3e3e3; color: #666; font-size: 10.200px; line-height: 26px; text-align: center; white-space: nowrap; }
.loom-hide { margin-left: 8px; color: #3d5fb5; font-size: 9.400px; text-decoration: underline; }
.cursor { position: absolute; left: 736px; top: 396px; width: 9px; height: 14px; }
```
